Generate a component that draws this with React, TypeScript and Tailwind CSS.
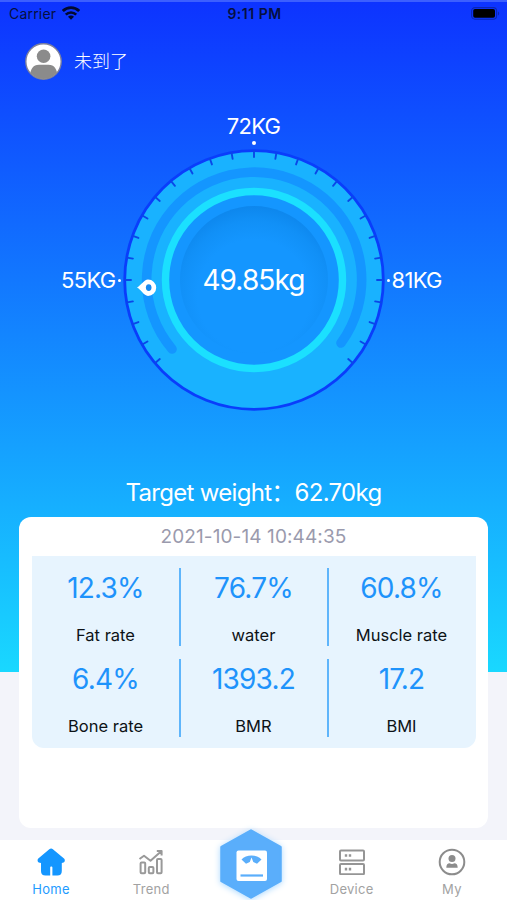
const TICKS = Array.from({ length: 27 }, (_, i) => -130 + i * 10);

const METRICS = [
  { value: "12.3%", label: "Fat rate" },
  { value: "76.7%", label: "water" },
  { value: "60.8%", label: "Muscle rate" },
  { value: "6.4%", label: "Bone rate" },
  { value: "1393.2", label: "BMR" },
  { value: "17.2", label: "BMI" },
];

const StatusBar = () => {
  return (
    <div className="mb-1 grid h-6 grid-cols-3 items-center border-t-2 border-[#3c5fff] pr-[7px] pl-[9px] text-[14px] text-[#06103f]">
      <div className="flex items-center gap-[6px]">
        <span className="tracking-[0.2px]">Carrier</span>
        <svg width="18" height="14" viewBox="0 0 18 14" fill="none" stroke="#020a30">
          <path d="M0.8 5a11.6 11.6 0 0 1 16.4 0" strokeWidth="2.9" />
          <path d="M3.800 8.600a7.400 7.400 0 0 1 10.400 0" strokeWidth="2.600" />
          <path d="M9 13.8 6 10.800a4.200 4.200 0 0 1 6 0Z" fill="#020a30" stroke="none" />
        </svg>
      </div>

      <span className="text-center text-[14px] font-semibold tracking-[0.5px] whitespace-nowrap">
        9:11 PM
      </span>

      <svg className="justify-self-end" width="29" height="13" viewBox="0 0 29 13">
        <rect x="0.6" y="0.6" width="25" height="11.6" rx="3.4" fill="none" stroke="#0a26b4" strokeWidth="1.1" />
        <rect x="2.2" y="2" width="21.8" height="8.8" rx="1.8" fill="#000" />
        <path d="M27 4.4v4c1.6-.7 1.6-3.3 0-4Z" fill="#0a26b4" />
      </svg>
    </div>
  );
};

const Profile = () => {
  return (
    <div className="flex h-[66px] items-center gap-[12px] pl-[25px]">
      <svg width="37" height="37" viewBox="0 0 37 37">
        <clipPath id="avatar">
          <circle cx="18.5" cy="18.5" r="17.5" />
        </clipPath>
        <circle cx="18.5" cy="18.5" r="17.7" fill="#fff" stroke="#7d819c" strokeWidth="1.4" />
        <g clipPath="url(#avatar)" fill="#8b8b8b">
          <circle cx="18.6" cy="13.3" r="6.8" />
          <path d="M5 34c0-8 3-12.3 9-12.3h9.4c6 0 9 4.3 9 12.3v4H5Z" />
        </g>
      </svg>
      <span className="pt-[2px] text-[18px] leading-6 font-light text-white">未到了</span>
    </div>
  );
};

const Dial = () => {
  return (
    <div className="relative h-[262px] w-[262px]">
      <svg width="262" height="262" viewBox="-131 -131 262 262">
        <defs>
          <radialGradient id="well" cx="0" cy="16" r="94" gradientUnits="userSpaceOnUse">
            <stop offset="0.6" stopColor="#1496ff" />
            <stop offset="0.8" stopColor="#1190f7" />
            <stop offset="1" stopColor="#0c84ea" />
          </radialGradient>
        </defs>

        <circle r="129.3" fill="#19b2ff" stroke="#0a3dfb" strokeWidth="2.8" />

        {TICKS.map((angle) => (
          <path
            key={angle}
            d="M0-129V-123"
            stroke="#0a47e8"
            strokeWidth="1.9"
            strokeLinecap="round"
            transform={`rotate(${angle})`}
          />
        ))}

        <path
          d="M-82 69A107.5 107.5 0 1 1 87 63"
          fill="none"
          stroke="#1496ff"
          strokeWidth="9.6"
          strokeLinecap="round"
        />

        <circle r="88.5" fill="#1496ff" stroke="#1be0ff" strokeWidth="7.4" />
        <circle r="74" fill="url(#well)" />

        {/* Needle */}
        <path
          d="M-117 7.5C-113.5 6-110-.5-106-.5a8.2 8.2 0 1 1 0 16.4c-4 0-7.5-6.9-11-8.4Z"
          fill="#fff"
        />
        <ellipse cx="-105.3" cy="7.6" rx="2.8" ry="3.4" fill="#1689f0" />
      </svg>

      <span className="absolute inset-0 flex items-center justify-center text-[28px] tracking-[-0.9px] text-white">
        49.85kg
      </span>
    </div>
  );
};

const Gauge = () => {
  return (
    <div className="flex flex-col items-center pt-5 text-[22px] tracking-[-0.7px] text-white">
      <span className="h-6 leading-6">72KG</span>
      <span className="mt-[3px] mb-[4px] size-[4px] rounded-full bg-white" />

      <div className="flex w-full items-center justify-center">
        <span className="flex w-[61px] items-center justify-end gap-[2px]">
          55KG
          <i className="mr-[2px] size-[3px] shrink-0 rounded-full bg-white" />
        </span>
        <Dial />
        <span className="flex w-[61px] items-center gap-[2px]">
          <i className="ml-[2px] size-[3px] shrink-0 rounded-full bg-white" />
          81KG
        </span>
      </div>
    </div>
  );
};

const Summary = () => {
  return (
    <div className="mx-auto h-[311px] w-[469px] rounded-xl bg-white px-[12.5px]">
      <p className="h-[39px] text-center text-[19px] leading-[39px] tracking-[0.1px] text-[#9a9aad]">
        2021-10-14 10:44:35
      </p>

      <div className="grid h-[192px] grid-cols-3 content-start rounded-b-xl bg-[#e7f4fe] pt-3">
        {METRICS.map((metric) => (
          <div
            key={metric.label}
            className="relative flex h-[91px] flex-col items-center not-nth-[3n]:after:absolute not-nth-[3n]:after:top-0 not-nth-[3n]:after:-right-[1px] not-nth-[3n]:after:h-[78px] not-nth-[3n]:after:w-[2px] not-nth-[3n]:after:bg-[#5fb5fb] not-nth-[3n]:after:content-['']"
          >
            <span className="h-10 text-[28px] leading-10 tracking-[-0.8px] text-[#1e93fb]">
              {metric.value}
            </span>
            <span className="mt-[15px] text-[16.5px] leading-6 text-[#0d1216]">{metric.label}</span>
          </div>
        ))}
      </div>
    </div>
  );
};

const HomeIcon = () => (
  <svg width="28" height="28" viewBox="0 0 28 28" fill="#1496ff">
    <path d="M12.3 1.2c1.100-.9 2.500-.9 3.600 0L27 10.600c1.500 1.300.9 3.900-1.300 4.200l-.9.100V23c0 3-1.500 4.500-4.500 4.500h-4.900V19.500c0-1.300-2.200-1.300-2.200 0v8H8.500C5.500 27.500 4 26 4 23v-8.100l-1.200-.1C.4 14.500 0 11.900 1.300 10.600Z" />
  </svg>
);

const TrendIcon = () => (
  <svg width="26" height="26" viewBox="0 0 26 26" fill="none" stroke="#999" strokeWidth="2">
    <rect x="2.6" y="13.6" width="4.6" height="10.6" rx="1" />
    <rect x="10.8" y="18" width="4.6" height="6.2" rx="1" />
    <rect x="19" y="10" width="4.6" height="14.2" rx="1" />
    <path d="M1.500 10 6 6.800l6.500 5L23 2.500M18.800 2H23.600V6.500" strokeLinejoin="round" />
  </svg>
);

const DeviceIcon = () => (
  <svg width="26" height="26" viewBox="0 0 26 26" fill="none" stroke="#959595" strokeWidth="2">
    <rect x="1" y="1.4" width="24" height="10.2" rx="1" />
    <rect x="1" y="15" width="24" height="10.2" rx="1" />
    <path d="M5.800 6.500h2.400M9.800 6.500h2.400M5.800 20.100h2.400M9.800 20.100h2.400" strokeWidth="2.600" />
  </svg>
);

const MyIcon = () => (
  <svg width="28" height="28" viewBox="0 0 28 28" fill="#8c8c8c">
    <circle cx="14" cy="14" r="12.3" fill="none" stroke="#8c8c8c" strokeWidth="2" />
    <circle cx="14" cy="10.6" r="3.500" />
    <path d="M8.300 19.800c0-3.100 1.300-4.500 3.400-4.500 1.300.9 3.300.9 4.600 0 2.100 0 3.400 1.400 3.400 4.500Z" />
  </svg>
);

const ScaleButton = () => (
  <svg className="-mt-[14px] drop-shadow-[0_1px_3px_#a9d8ff]" width="64" height="72" viewBox="0 0 64 72">
    <path
      d="M32 2.500 61.500 19V53L32 69.500 2.500 53V19Z"
      fill="#5aaefb"
      stroke="#5aaefb"
      strokeWidth="2.5"
      strokeLinejoin="round"
    />
    <rect x="17.5" y="22.5" width="30.5" height="30.5" rx="2" fill="#fff" />
    <path d="M22.500 31.500C27 26 38 26 42.500 31.500L38 35.700 34.300 34 32.500 29.500 30.800 34 27 35.700Z" fill="#5aaefb" />
    <path d="M21.500 47.500H44" stroke="#5aaefb" strokeWidth="2.2" />
  </svg>
);

const TABS = [
  { label: "Home", icon: <HomeIcon />, color: "text-[#1e9bff]" },
  { label: "Trend", icon: <TrendIcon />, color: "text-[#a2a2a2]" },
  { label: "", icon: <ScaleButton />, color: "" },
  { label: "Device", icon: <DeviceIcon />, color: "text-[#a2a2a2]" },
  { label: "My", icon: <MyIcon />, color: "text-[#a2a2a2]" },
];

const TabBar = () => {
  return (
    <nav className="mt-3 h-[60px] bg-white">
      <div className="ml-[1px] grid w-[501px] grid-cols-5">
        {TABS.map((tab) => (
          <div key={tab.label} className={`flex flex-col items-center pt-[2px] ${tab.color}`}>
            {tab.label ? (
              <>
                <span className="flex h-[40px] items-center">{tab.icon}</span>
                <span className="text-[13px] leading-[14px] tracking-[0.3px]">{tab.label}</span>
              </>
            ) : (
              tab.icon
            )}
          </div>
        ))}
      </div>
    </nav>
  );
};

const App = () => {
  return (
    <div className="h-[900px] w-[507px] overflow-hidden bg-[linear-gradient(to_bottom,#0d33ff_0px,#19d8ff_672px,#f3f4fa_672px)] font-['Inter','Noto_Sans_CJK_SC',sans-serif]">
      <StatusBar />
      <Profile />
      <Gauge />

      <p className="mt-[69px] mb-[11px] h-[26px] text-center text-[24px] leading-[26px] tracking-[-0.7px] whitespace-nowrap text-white">
        Target weight：62.70kg
      </p>

      <Summary />
      <TabBar />
    </div>
  );
};

export default App;
